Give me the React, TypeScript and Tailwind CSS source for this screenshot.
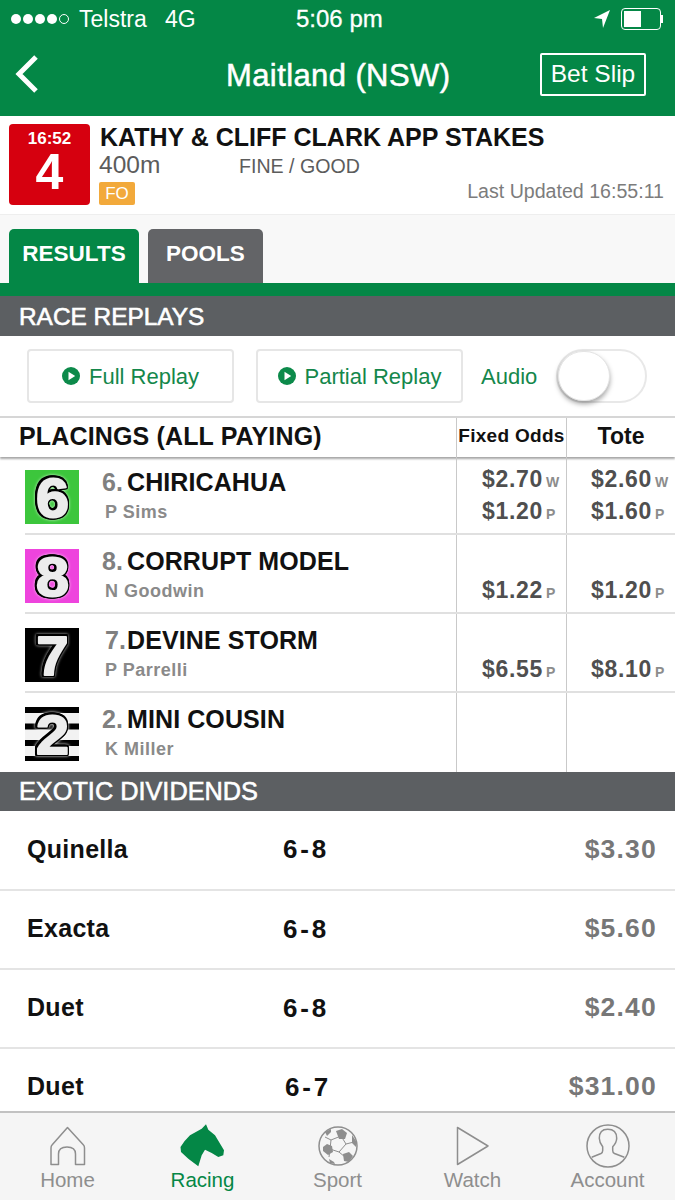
const dividends = [
  { name: "Quinella", combo: "6-8", amount: "$3.30", rowClass: "h-[80px] pb-[1px]", nameClass: "w-[256px]" },
  { name: "Exacta", combo: "6-8", amount: "$5.60", rowClass: "h-[79px] pb-[1px]", nameClass: "w-[256px]" },
  { name: "Duet", combo: "6-8", amount: "$2.40", rowClass: "h-[79px] pb-[1px]", nameClass: "w-[256px]" },
  { name: "Duet", combo: "6-7", amount: "$31.00", rowClass: "h-[62px] pt-[14px]", nameClass: "w-[258px]" },
];

type Odds = { value: string; kind: string };

const placings: {
  no: string;
  name: string;
  jockey: string;
  fixed: Odds[];
  tote: Odds[];
  rowClass: string;
}[] = [
  {
    no: "6",
    name: "CHIRICAHUA",
    jockey: "P Sims",
    fixed: [{ value: "$2.70", kind: "W" }, { value: "$1.20", kind: "P" }],
    tote: [{ value: "$2.60", kind: "W" }, { value: "$1.60", kind: "P" }],
    rowClass: "h-[78px] pt-[13px]",
  },
  {
    no: "8",
    name: "CORRUPT MODEL",
    jockey: "N Goodwin",
    fixed: [{ value: "$1.22", kind: "P" }],
    tote: [{ value: "$1.20", kind: "P" }],
    rowClass: "h-[79px] pt-[14px]",
  },
  {
    no: "7",
    name: "DEVINE STORM",
    jockey: "P Parrelli",
    fixed: [{ value: "$6.55", kind: "P" }],
    tote: [{ value: "$8.10", kind: "P" }],
    rowClass: "h-[79px] pt-[14px]",
  },
  { no: "2", name: "MINI COUSIN", jockey: "K Miller", fixed: [], tote: [], rowClass: "h-[79px] pt-[14px]" },
];

// number outline and soft halo, per saddle cloth
const clothGlow: Record<string, string> = {
  "6": "[filter:drop-shadow(1.3px_0_0_#000)_drop-shadow(-1.3px_0_0_#000)_drop-shadow(0_1.3px_0_#000)_drop-shadow(0_-1.3px_0_#000)_drop-shadow(0_0_1.5px_#c4f4c4)_blur(0.5px)]",
  "8": "[filter:drop-shadow(1.3px_0_0_#000)_drop-shadow(-1.3px_0_0_#000)_drop-shadow(0_1.3px_0_#000)_drop-shadow(0_-1.3px_0_#000)_drop-shadow(0_0_1.5px_#fbc4f4)_blur(0.5px)]",
  "7": "[filter:drop-shadow(1.3px_0_0_#000)_drop-shadow(-1.3px_0_0_#000)_drop-shadow(0_1.3px_0_#000)_drop-shadow(0_-1.3px_0_#000)_drop-shadow(0_0_1.5px_#bbbbbb)_blur(0.5px)]",
  "2": "[filter:drop-shadow(1.3px_0_0_#000)_drop-shadow(-1.3px_0_0_#000)_drop-shadow(0_1.3px_0_#000)_drop-shadow(0_-1.3px_0_#000)_drop-shadow(0_0_1.5px_#ffffff)_blur(0.5px)]",
};

function SaddleCloth({ no }: { no: string }) {
  const bg: Record<string, string> = { "6": "#3cc63c", "8": "#ee44dd", "7": "#000000", "2": "#000000" };
  return (
    <svg width="54" height="54" viewBox="0 0 54 54" className="shrink-0 block overflow-visible">
      <rect width="54" height="54" fill={bg[no]} />
      {no === "2" && (
        <g fill="#f2f2f2" className="blur-[0.6px]">
          <rect y="6" width="54" height="10.5" />
          <rect y="22.5" width="54" height="10.5" />
          <rect y="39" width="54" height="10" />
        </g>
      )}
      <text
        x="27.5"
        y="47"
        textAnchor="middle"
        fontFamily="'Liberation Sans', sans-serif"
        fontWeight="700"
        fontSize="56"
        fill="#ececec"
        stroke="#ececec"
        strokeWidth="2"
        strokeLinejoin="round"
        textLength={no === "7" ? 32 : 33}
        lengthAdjust="spacingAndGlyphs"
        className={clothGlow[no]}
      >
        {no}
      </text>
    </svg>
  );
}

function OddsCell({ odds }: { odds: Odds[] }) {
  return (
    <div className="h-full border-l border-[#c9c9c9] flex flex-col justify-end items-end pb-[8px] pr-[4px]">
      {odds.map((o) => (
        <div key={o.kind} className="flex items-baseline h-[32px] leading-[32px]">
          <span className="text-[23px] font-bold text-[#4f4f4f] tracking-[0.7px]">{o.value}</span>
          <span className="w-[16px] ml-[3px] text-[14px] font-bold text-[#8c8c8c]">{o.kind}</span>
        </div>
      ))}
    </div>
  );
}

function SectionBar({ title, barClass }: { title: string; barClass: string }) {
  return (
    <div className={`${barClass} bg-[#5c5f62] flex items-center pl-[19px] text-white [-webkit-text-stroke:0.6px_#fff] shrink-0`}>
      {title}
    </div>
  );
}

function PlayDot() {
  return (
    <svg width="18" height="18" viewBox="0 0 18 18" className="shrink-0">
      <circle cx="9" cy="9" r="9" fill="#0c8a4a" />
      <path d="M6.5 4.8 L13.2 9 L6.5 13.2 Z" fill="#fff" />
    </svg>
  );
}

function TabIcon({ label }: { label: string }) {
  const grey = "#8e8e8e";
  if (label === "Home")
    return (
      <svg width="38" height="40" viewBox="0 0 38 40" fill="none" stroke={grey} strokeWidth="1.5" strokeLinejoin="round">
        <path d="M18.5 1.5 L3 19 Q2 20 2 22 V38.5 H9.5 V28 Q9.5 21 18 21 Q26.5 21 26.5 28 V38.5 H35.5 V22 Q35.5 20 34.5 19 Z" />
      </svg>
    );
  if (label === "Racing")
    return (
      <svg width="46" height="44" viewBox="0 0 46 44" fill="#048746">
        <path d="M0.5 23 Q4 17 10 11.3 L21.7 4.7 L26 0.3 L28.3 5.7 L35 11.3 L44 26.3 L43.3 31.3 L38.3 33 L31.7 29 L25 25.7 L21.7 31.3 L18.3 42.3 L8.3 34.7 L1 28 Z" />
      </svg>
    );
  if (label === "Sport")
    return (
      <svg width="40" height="40" viewBox="0 0 40 40" fill="none" stroke={grey} strokeWidth="1.5">
        <circle cx="20" cy="20" r="19" />
        <path d="M23 10 L28 18 L21 26 L12 23 L13 14 Z" strokeWidth="1" />
        <path d="M28 18 L36 16 M21 26 L27 31 M12 23 L11 31 M13 14 L7 11" strokeWidth="1" />
        <path d="M18 5 L24 3 L29 7 L27 13 L21 13 Z" fill={grey} stroke="none" />
        <path d="M9 18 L14 20 L15 26 L10 29 L5 25 L5 21 Z" fill={grey} stroke="none" />
        <path d="M25 28 L31 26 L35 30 L31 36 L26 35 Z" fill={grey} stroke="none" />
        <path d="M34 9 L38 15 L38 21 L34 17 Z" fill={grey} stroke="none" />
        <path d="M7 6 L13 3 L13 6 L9 10 Z" fill={grey} stroke="none" />
        <path d="M11 33 L16 36 L17 38 L12 37 Z" fill={grey} stroke="none" />
      </svg>
    );
  if (label === "Watch")
    return (
      <svg width="34" height="40" viewBox="0 0 34 40" fill="none" stroke={grey} strokeWidth="1.5">
        <path d="M1.5 1.5 V38.5 L32 20 Z" strokeLinejoin="round" />
      </svg>
    );
  return (
    <svg width="44" height="44" viewBox="0 0 44 44" fill="none" stroke={grey} strokeWidth="1.5" strokeLinejoin="round">
      <circle cx="22" cy="22" r="21" />
      <path d="M5.7 33.3 L15 29.5 Q16.7 28.7 16.7 26.5 V22.7 Q13.3 18.5 13.3 14.3 Q13.3 5.3 21.7 5.3 Q30.7 5.3 30.7 14.3 Q30.7 18.5 26.7 22.7 V26.5 Q26.7 28.7 28.5 29.5 L38.3 33.3" />
    </svg>
  );
}

const tabs = ["Home", "Racing", "Sport", "Watch", "Account"];

export default function App() {
  return (
    <div className="w-[675px] h-[1200px] overflow-hidden flex flex-col bg-white font-['Liberation_Sans',sans-serif]">
      {/* Status bar and nav */}
      <div className="h-[116px] bg-[#048746] text-white shrink-0 flex flex-col">
        <div className="h-[38px] flex items-center pl-[11px] pr-[10px]">
          <div className="flex items-center gap-[2px]">
            {[0, 1, 2, 3].map((i) => (
              <span key={i} className="w-[10px] h-[10px] rounded-full bg-white" />
            ))}
            <span className="w-[10px] h-[10px] rounded-full border border-white" />
          </div>
          <span className="ml-[10px] text-[23px] w-[86px]">Telstra</span>
          <span className="text-[23px] w-[131px]">4G</span>
          <span className="text-[24px] [-webkit-text-stroke:0.3px_#fff]">5:06 pm</span>
          <svg width="16" height="18" viewBox="0 0 16 18" className="ml-auto mr-[11px]">
            <path d="M0 8 L16 0 L9 18 L8 9 Z" fill="#fff" />
          </svg>
          <div className="w-[40px] h-[22px] rounded-[4px] border border-white p-[2px]">
            <div className="w-[17px] h-full bg-white" />
          </div>
          <div className="w-[2px] h-[8px] bg-white mr-[2px]" />
        </div>
        <div className="flex-1 flex items-center pl-[15px] pr-[29px] pb-[6px]">
          <svg width="24" height="38" viewBox="0 0 24 38" fill="none" stroke="#fff" strokeWidth="5">
            <path d="M21 2 L4 19 L21 36" />
          </svg>
          <span className="ml-[187px] mt-[4px] text-[31px] tracking-[0.4px] [-webkit-text-stroke:0.5px_#fff]">Maitland (NSW)</span>
          <span className="ml-auto w-[106px] h-[43px] border-2 border-white rounded-[2px] flex items-center justify-center text-[24.5px]">
            Bet Slip
          </span>
        </div>
      </div>

      {/* Race info */}
      <div className="h-[98px] flex pl-[9px] pt-[8px] pr-[11px] shrink-0">
        <div className="w-[81px] h-[81px] rounded-[4px] bg-[#d6000f] text-white flex flex-col items-center shrink-0">
          <span className="text-[17px] font-bold leading-[20px] mt-[5px]">16:52</span>
          <span className="text-[50px] font-bold leading-[46px]">4</span>
        </div>
        <div className="ml-[9px] flex-1 flex flex-col">
          <div className="ml-[1px] text-[25px] font-bold text-[#111] leading-[26px]">KATHY &amp; CLIFF CLARK APP STAKES</div>
          <div className="flex items-baseline text-[#5c5c5c] mt-[1px] h-[27px]">
            <span className="text-[24.5px] w-[140px] leading-[28px]">400m</span>
            <span className="text-[19.6px] leading-[26px]">FINE / GOOD</span>
          </div>
          <div className="flex items-start justify-between">
            <span className="mt-[4px] w-[36px] h-[23px] rounded-[2px] bg-[#f2a93b] text-white text-[17px] flex items-center justify-center">
              FO
            </span>
            <span className="mt-[2px] text-[19.6px] leading-[23px] text-[#7c7c7c]">Last Updated 16:55:11</span>
          </div>
        </div>
      </div>

      {/* Tabs */}
      <div className="h-[69px] bg-[#f8f8f8] flex items-end pl-[9px] gap-[9px] border-t border-[#eeeeee] shrink-0">
        <div className="w-[130px] h-[54px] rounded-t-[5px] bg-[#048746] text-white text-[22.5px] font-bold flex items-center justify-center pb-[5px]">
          RESULTS
        </div>
        <div className="w-[115px] h-[54px] rounded-t-[5px] bg-[#636467] text-white text-[22.5px] font-bold flex items-center justify-center pb-[5px]">
          POOLS
        </div>
      </div>
      <div className="h-[13px] bg-[#048746] shrink-0" />

      <SectionBar title="RACE REPLAYS" barClass="h-[40px] pt-[3px] text-[24.4px]" />

      {/* Replay buttons */}
      <div className="h-[80px] flex items-center pl-[27px] shrink-0">
        <div className="w-[207px] h-[54px] border-2 border-[#e6e6e6] rounded-[4px] flex items-center justify-center gap-[9px] text-[#14874b] text-[22px]">
          <PlayDot />
          Full Replay
        </div>
        <div className="ml-[22px] w-[207px] h-[54px] border-2 border-[#e6e6e6] rounded-[4px] flex items-center justify-center gap-[9px] text-[#14874b] text-[22px]">
          <PlayDot />
          Partial Replay
        </div>
        <span className="ml-[18px] text-[#14874b] text-[22px]">Audio</span>
        <div className="ml-[19px] w-[91px] h-[54px] rounded-full border-2 border-[#e8e8e8] bg-white">
          <div className="w-[52px] h-[50px] rounded-full bg-white border border-[#e4e4e4] shadow-[0_3px_5px_rgba(0,0,0,0.35)]" />
        </div>
      </div>

      {/* Placings header */}
      <div className="h-[41px] grid grid-cols-[456px_110px_1fr] border-t-2 border-[#d6d6d6] shadow-[0_2px_2px_rgba(0,0,0,0.35)] relative shrink-0">
        <div className="pl-[19px] pb-[2px] flex items-center text-[25px] tracking-[0.15px] font-bold text-[#111]">PLACINGS (ALL PAYING)</div>
        <div className="border-l border-[#c9c9c9] pb-[3px] flex items-center justify-center text-[19px] font-bold text-[#111] tracking-[0.3px]">
          Fixed Odds
        </div>
        <div className="border-l border-[#c9c9c9] pb-[4px] flex items-center justify-center text-[23px] font-bold text-[#111]">
          Tote
        </div>
      </div>

      {/* Placings rows */}
      <div className="shrink-0">
        {placings.map((p, i) => (
          <div key={p.no} className="grid grid-cols-[456px_110px_1fr] relative">
            {i < placings.length - 1 && (
              <div className="absolute left-[25px] right-0 bottom-0 h-[2px] bg-[#e0e0e0]" />
            )}
            <div className={`flex items-start pl-[25px] ${p.rowClass}`}>
              <SaddleCloth no={p.no} />
              <div className="ml-[23px] -mt-[3px]">
                <div className="flex text-[25px] font-bold text-[#111] leading-[30px] tracking-[0.1px]">
                  <span className={`w-[25px] text-[#808080] ${p.no === "7" ? "pl-[3px]" : ""}`}>{p.no}.</span>
                  {p.name}
                </div>
                <div className="mt-[4px] ml-[3px] text-[18px] font-bold text-[#8a8a8a] leading-[22px] tracking-[0.5px]">
                  {p.jockey}
                </div>
              </div>
            </div>
            <OddsCell odds={p.fixed} />
            <OddsCell odds={p.tote} />
          </div>
        ))}
      </div>

      <SectionBar title="EXOTIC DIVIDENDS" barClass="h-[39px] pt-[1px] text-[25.3px]" />

      {/* Exotic dividends */}
      <div className="flex-1 overflow-hidden">
        {dividends.map((d, i) => (
          <div
            key={i}
            className={`${d.rowClass} flex items-center pl-[27px] pr-[18px] ${
              i < dividends.length - 1 ? "border-b-2 border-[#e4e4e4]" : ""
            } text-[25px] font-bold`}
          >
            <span className={`${d.nameClass} text-[#111] tracking-[0.3px]`}>{d.name}</span>
            <span className="text-[#111] text-[26px] tracking-[2.8px]">{d.combo}</span>
            <span className="ml-auto text-[#777] text-[26.5px] tracking-[1.2px]">{d.amount}</span>
          </div>
        ))}
      </div>

      {/* Bottom tabs */}
      <div className="h-[89px] bg-[#f5f5f5] border-t-2 border-[#c2c2c2] grid grid-cols-5 shrink-0">
        {tabs.map((t) => (
          <div key={t} className="flex flex-col items-center justify-end pb-[8px]">
            <div className="h-[44px] flex items-center justify-center">
              <TabIcon label={t} />
            </div>
            <span className={`text-[20.5px] leading-[24px] ${t === "Racing" ? "text-[#048746]" : "text-[#8e8e8e]"}`}>
              {t}
            </span>
          </div>
        ))}
      </div>
    </div>
  );
}
